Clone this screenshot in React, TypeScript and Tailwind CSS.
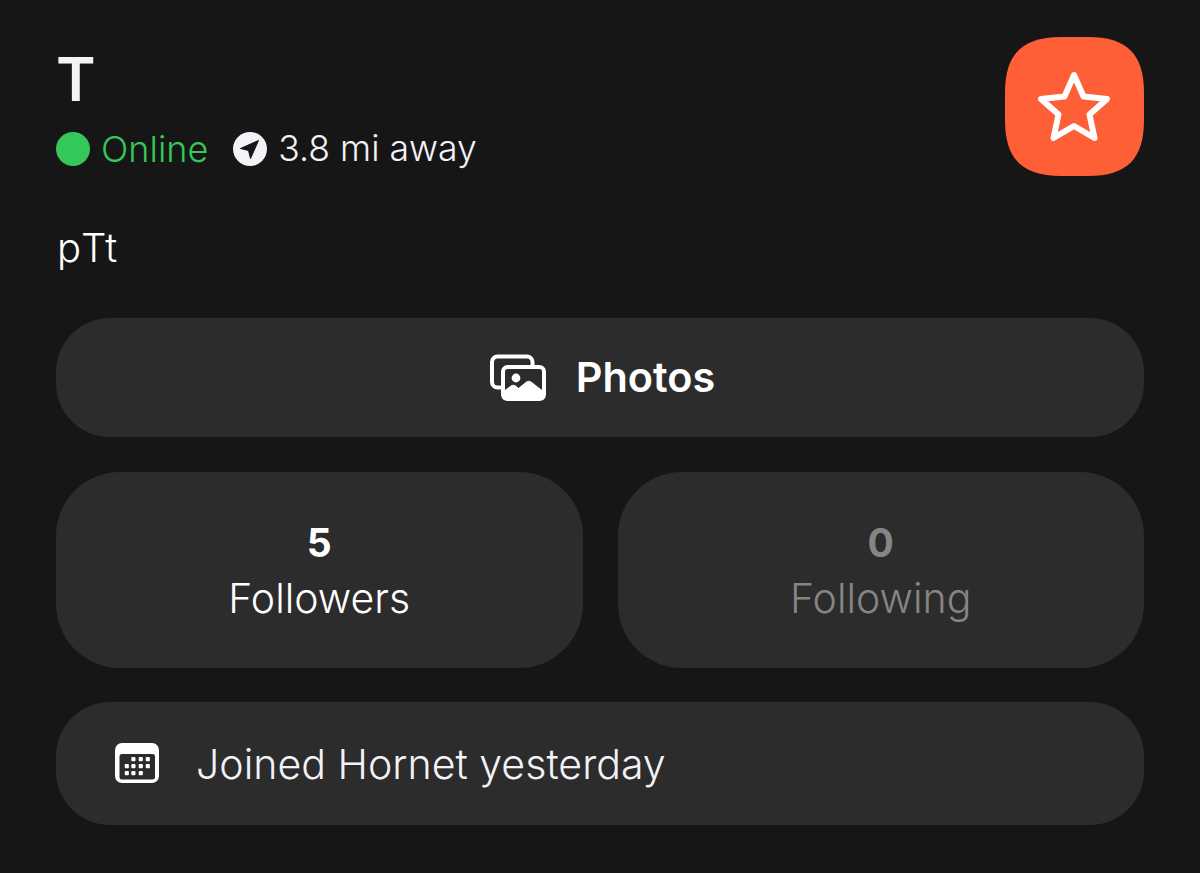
const font = "font-['Inter','Liberation_Sans',sans-serif]";

const CalendarIcon = () => {
  const rows = [
    { y: 15, xs: [17.3, 24.7, 31.7] },
    { y: 22, xs: [10.7, 17.3, 24.7, 31.7] },
    { y: 29, xs: [10.7, 17.3, 24.7] },
  ];
  return (
    <svg width="46" height="42" viewBox="0 0 46 42" className="shrink-0 -mt-[1px]">
      <rect x="1" y="1" width="44" height="40" rx="7" fill="#fff" />
      <rect x="5.500" y="12" width="35.500" height="25.500" rx="2.500" fill="#2c2c2c" />
      {rows.map((r) =>
        r.xs.map((x) => <rect key={`${r.y}-${x}`} x={x} y={r.y} width="4.200" height="4.200" rx="1" fill="#fff" />)
      )}
    </svg>
  );
};

const PhotosIcon = () => (
  <svg width="56" height="48" viewBox="0 0 56 48" className="shrink-0">
    <path
      d="M10 33.500H7.500A5.500 5.500 0 0 1 2 28V8A5.500 5.500 0 0 1 7.500 2.500H37A5.500 5.500 0 0 1 42.500 8V11"
      fill="none"
      stroke="#fff"
      strokeWidth="4"
      strokeLinecap="round"
    />
    <rect x="13" y="13" width="41" height="32" rx="4.500" fill="#2c2c2c" stroke="#fff" strokeWidth="4" />
    <circle cx="26" cy="24" r="4.400" fill="#fff" />
    <path
      d="M13 45V38L21 32C22.500 31 24 31 25.500 32L28.500 34.500L36.500 28C38 27 39.500 27 41 28L54 38V45Z"
      fill="#fff"
      stroke="#fff"
      strokeLinejoin="round"
    />
  </svg>
);

// squircle badge plus outlined star
const StarBadge = () => (
  <svg width="139" height="139" viewBox="0 0 139 139" className="shrink-0">
    <path
      d="M56 0H83C122 0 139 17 139 56V83C139 122 122 139 83 139H56C17 139 0 122 0 83V56C0 17 17 0 56 0Z"
      fill="#ff5f36"
    />
    <path
      d="M69 38L78.500 59.500L102 62L84.500 77.500L89.500 101L69 89L48.500 101L53.500 77.500L36 62L59.500 59.500Z"
      fill="none"
      stroke="#fff"
      strokeWidth="6"
      strokeLinejoin="round"
    />
  </svg>
);

const NavIcon = () => (
  <svg width="34" height="34" viewBox="0 0 34 34" className="shrink-0">
    <circle cx="17" cy="17" r="17" fill="#f2f2f7" />
    <path d="M25.500 8.500L7.500 16.500L15.500 18.500L17.500 26.500Z" fill="#161616" stroke="#161616" strokeLinejoin="round" />
  </svg>
);

export default function App() {
  return (
    <div className={`${font} w-[1200px] h-[873px] overflow-hidden bg-[#161616] px-14 text-white`}>
      <div className="flex justify-between pt-[37px] h-[177px]">
        <div>
          <h1 className="text-[60px] leading-[64px] font-semibold text-[#f2f2f7] mt-[10px] h-[64px]">T</h1>
          <div className="flex items-center text-[36px] leading-[44px] h-[44px] mt-[16px]">
            <span className="w-[34px] h-[34px] rounded-full bg-[#34c759] shrink-0" />
            <span className="text-[#34c759] ml-[11px] font-light">Online</span>
            <span className="ml-[25px]"><NavIcon /></span>
            <span className="ml-[11px] text-[35.600px] text-[#f2f2f7] font-light">3.8 mi away</span>
          </div>
        </div>
        <StarBadge />
      </div>

      <p className="text-[40px] leading-[46px] font-light text-white mt-[48px] ml-[1px] h-[46px] tracking-[3px]">pTt</p>

      <div className="mt-[47px] h-[119px] rounded-[54px] bg-[#2c2c2c] flex items-center justify-center gap-[30px] pl-[5px]">
        <PhotosIcon />
        <span className="text-[41.400px] font-semibold leading-none">Photos</span>
      </div>

      <div className="mt-[35px] grid grid-cols-2 gap-[35px]">
        <div className="h-[196px] pt-[3px] rounded-[64px] bg-[#2c2c2c] flex flex-col items-center justify-center">
          <span className="text-[39px] leading-[52px] h-[53px] font-bold">5</span>
          <span className="text-[41px] leading-[56px] font-light">Followers</span>
        </div>
        <div className="h-[196px] pt-[3px] rounded-[64px] bg-[#2c2c2c] flex flex-col items-center justify-center text-[#858585]">
          <span className="text-[39px] leading-[52px] h-[53px] font-bold">0</span>
          <span className="text-[41px] leading-[56px] font-light">Following</span>
        </div>
      </div>

      <div className="mt-[34px] h-[123px] rounded-[54px] bg-[#2c2c2c] flex items-center pl-[58px] gap-[36px]">
        <CalendarIcon />
        <span className="pt-[2px] text-[41.100px] font-light leading-none text-[#f2f2f7]">Joined Hornet yesterday</span>
      </div>
    </div>
  );
}
